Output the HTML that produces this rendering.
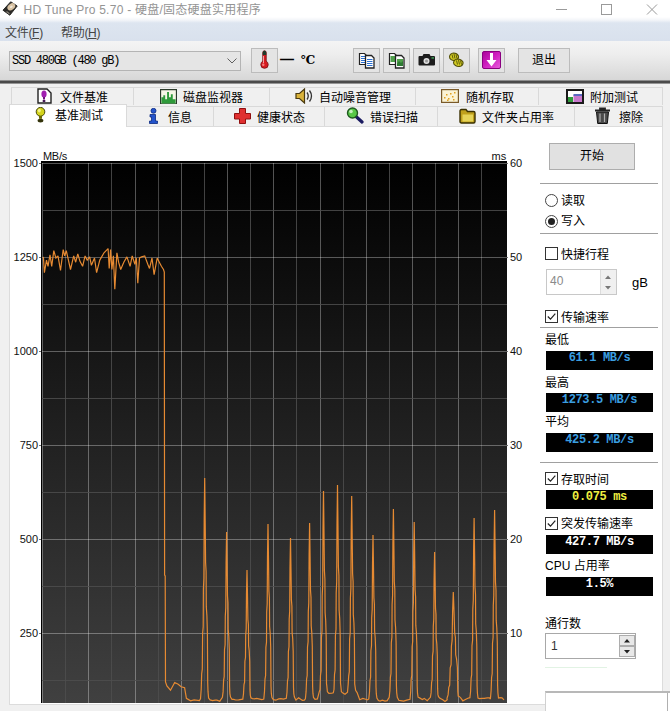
<!DOCTYPE html>
<html lang="zh-CN">
<head>
<meta charset="utf-8">
<title>HD Tune Pro 5.70 - 硬盘/固态硬盘实用程序</title>
<style>
html,body{margin:0;padding:0;}
body{width:670px;height:711px;overflow:hidden;background:#f0f0f0;position:relative;
 font-family:"Liberation Sans","Noto Sans CJK SC",sans-serif;font-size:12px;color:#000;}
#win div,#win svg,#win span{position:absolute;box-sizing:border-box;}
#win{position:absolute;left:0;top:0;width:670px;height:711px;overflow:hidden;background:#f0f0f0;}
#win span.t{white-space:nowrap;line-height:16px;}
/* title bar */
#title{left:0;top:0;width:670px;height:20px;background:#fff;}
#title .cap{left:23.5px;top:1px;font-size:12px;letter-spacing:0.25px;color:#949494;line-height:18px;white-space:nowrap;}
/* menu */
#menu{left:0;top:17px;width:670px;height:24px;background:linear-gradient(#fff 0,#f3f5f9 3px,#dde5f0 6px,#d9e1ed 100%);}
#menu span{top:8px;line-height:16px;color:#444;white-space:nowrap;}
/* toolbar */
#tool{left:0;top:41px;width:670px;height:40px;background:linear-gradient(#f4f4f4,#ededed 35%,#d6d6d6);}
#sep{left:0;top:80px;width:670px;height:4px;background:linear-gradient(#bdbdbd,#4a4a4a 30%,#4a4a4a 70%,#c8c8c8);}
.combo{left:9px;top:51px;width:232px;height:20px;border:1px solid #b4b4b4;background:#e5e5e5;}
.mono{font-family:"Liberation Mono","Noto Sans CJK SC",monospace;}
.btn{border:1px solid #bcbcbc;background:#e4e4e4;}
/* tabs */
.tab{height:20px;border:1px solid #d9d9d9;border-bottom:none;background:#f0f0f0;}
.tab span{top:2px;line-height:16px;white-space:nowrap;}
.chart{position:absolute;}
.chart line.maj{stroke:#fff;stroke-opacity:0.32;}
.lcd{background:#000;height:19px;width:107px;left:546px;text-align:center;color:#3a9ee0;
 font-family:"Liberation Mono",monospace;font-weight:bold;font-size:12px;line-height:15.500px;letter-spacing:-0.35px;white-space:nowrap;}
.ylab{font-size:11px;line-height:12px;width:30px;text-align:right;left:8px;color:#111;}
.rlab{font-size:11px;line-height:12px;left:511px;color:#111;}
.hr{left:540px;width:118px;height:1px;background:#a0a0a0;}

.lbl{left:561px;line-height:16px;white-space:nowrap;}

.ax{font-size:11px;line-height:14px !important;color:#111;}
.radio{width:13px;height:13px;border:1px solid #444;border-radius:50%;background:#fff;}
.radio i{position:absolute;left:2px;top:2px;width:7px;height:7px;border-radius:50%;background:#222;}
#win .cb{left:545px;}
.lcd b{font-weight:bold;}
</style>
</head>
<body>
<div id="win">
 <div id="title">
  <svg style="left:0px;top:0px" width="20" height="17" viewBox="0 0 20 17"><path d="M10.700 1.800L17.200 6L9.800 15.200L3 10.200Z" fill="#2b2a27" stroke="#2b2a27" stroke-width="1" stroke-linejoin="round"/><ellipse cx="11.300" cy="6.800" rx="4.300" ry="3" transform="rotate(-38 11.300 6.800)" fill="#d9c3a3"/><ellipse cx="11.300" cy="6.800" rx="1.500" ry="1" transform="rotate(-38 11.300 6.800)" fill="#f4eadb"/><path d="M6.500 11.500L9.500 13.700" stroke="#8a8478" stroke-width="1.200"/></svg>
  <span class="cap">HD Tune Pro 5.70 - 硬盘/固态硬盘实用程序</span>
  <svg style="left:556px;top:3px" width="104" height="14" viewBox="0 0 104 14" fill="none" stroke="#9a9a9a" stroke-width="1"><path d="M0 6.5h11"/><rect x="45.5" y="1.5" width="10" height="10"/><path d="M91 1.500l10 10M101 1.500l-10 10"/></svg>
 </div>
 <div id="menu"><span style="left:5px;letter-spacing:-0.3px">文件(<u>F</u>)</span><span style="left:61px;letter-spacing:-0.3px">帮助(<u>H</u>)</span></div>
 <div id="tool"></div>

 <div class="btn" style="left:251px;top:48px;width:27px;height:25px"></div>
 <svg style="left:259px;top:50px" width="11" height="20" viewBox="0 0 11 20"><path d="M3.800 2.500q0-1.700 1.700-1.700q1.700 0 1.700 1.700v8.500q2 1.500 2 3.700q0 3.600-3.700 3.600q-3.700 0-3.700-3.600q0-2.200 2-3.700z" fill="#d81a20" stroke="#7a1216" stroke-width="0.900"/><path d="M3.800 2.500q0-1.700 1.700-1.700q1.700 0 1.700 1.700v2.500h-3.400z" fill="#1c3a2a"/><path d="M4.500 6v7" stroke="#f0a0a0" stroke-width="1"/><circle cx="4.300" cy="14.800" r="1.200" fill="#f08080"/></svg>
 <span class="t" style="left:280px;top:51px;font-weight:bold;font-size:14px">—</span>
 <span class="t" style="left:301px;top:52px;font-family:'DejaVu Serif','Noto Serif CJK SC',serif;font-weight:bold;font-size:12px">℃</span>
 <div class="btn" style="left:353px;top:48px;width:27px;height:25px"></div>
 <div class="btn" style="left:383px;top:48px;width:27px;height:25px"></div>
 <div class="btn" style="left:413px;top:48px;width:27px;height:25px"></div>
 <div class="btn" style="left:443px;top:48px;width:27px;height:25px"></div>
 <div class="btn" style="left:478px;top:48px;width:27px;height:25px"></div>
 <div class="btn" style="left:518px;top:48px;width:52px;height:25px"></div>
 <span class="t" style="left:532px;top:52px;">退出</span>

 <!-- copy text icon -->
 <svg style="left:358px;top:52px" width="18" height="17" viewBox="0 0 18 17"><path d="M1.5 1.5h5l2 2v9h-7z" fill="#fff" stroke="#222" stroke-width="1.2"/><path d="M3 4.500h4M3 6.500h4M3 8.500h4M3 10.500h4" stroke="#2a6fd0" stroke-width="1"/><path d="M7.500 3.500h6l2.500 2.500v10h-8.500z" fill="#fff" stroke="#222" stroke-width="1.3"/><path d="M9 7.500h5.500M9 9.500h5.500M9 11.500h5.500M9 13.500h5.500" stroke="#2a6fd0" stroke-width="1"/></svg>
 <!-- copy image icon -->
 <svg style="left:388px;top:52px" width="18" height="17" viewBox="0 0 18 17"><path d="M1.500 1.500h5l2 2v9h-7z" fill="#fff" stroke="#222" stroke-width="1.200"/><rect x="2.500" y="4" width="5" height="6" fill="#4fa04a"/><path d="M7.500 3.500h6l2.500 2.500v10h-8.500z" fill="#fff" stroke="#222" stroke-width="1.300"/><rect x="9" y="7" width="6" height="7" fill="#4fa04a"/><path d="M9 12l2-3 2 2 2-2v5h-6z" fill="#2d7a32"/></svg>
 <!-- camera -->
 <svg style="left:418px;top:53px" width="18" height="14" viewBox="0 0 18 14"><path d="M5.500 1h6l1 2h3.500q1 0 1 1v7.500q0 1-1 1h-14.500q-1 0-1-1v-7.500q0-1 1-1h3z" fill="#1c1c1c"/><circle cx="8.500" cy="7.900" r="3" fill="#e0e0e0"/><circle cx="8.500" cy="7.900" r="1.500" fill="#9a9a9a"/><rect x="13.500" y="4.200" width="2.500" height="1.500" fill="#3a9a50"/></svg>
 <!-- yellow tool -->
 <svg style="left:448px;top:52px" width="17" height="16" viewBox="0 0 17 16"><g fill="#d2cb22" stroke="#55520a" stroke-width="1.100"><path d="M1.500 4.500q0.500-3 4-3.500q3.500 0 5 3q0.500 2.500-2 4q-3 1.200-5.500-0.500q-1.600-1.200-1.500-3z"/><path d="M5.500 10.500q0.500-3 4-3.500q3.500 0 5.500 3q0.500 2.500-2 4q-3 1.200-5.500-0.500q-2-1.200-2-3z"/></g><path d="M4 2.500l1 4M6 2l1 4.500M8 2.500l1 4M8.500 8.500l1 4M10.500 8l1 4.500M12.500 8.500l1 4" stroke="#55520a" stroke-width="0.900" fill="none"/></svg>
 <!-- purple download -->
 <svg style="left:482px;top:51px" width="19" height="18" viewBox="0 0 19 18"><defs><linearGradient id="pg" x1="0" y1="0" x2="1" y2="1"><stop offset="0" stop-color="#a80098"/><stop offset="0.500" stop-color="#d020c0"/><stop offset="1" stop-color="#e860dc"/></linearGradient></defs><rect x="0.500" y="0.500" width="18" height="17" rx="1.500" fill="url(#pg)" stroke="#8a0080" stroke-width="1"/><path d="M8 2h3v7h3.500l-5 6.500l-5-6.500h3.500z" fill="#fff"/></svg>

 <div id="sep"></div>
 <div class="combo"><span class="t mono" style="left:2px;top:1px;font-size:12px;letter-spacing:-1.25px">SSD 480GB (480 gB)</span>
  <svg style="left:217px;top:6px" width="10" height="6" viewBox="0 0 10 6" fill="none" stroke="#606060" stroke-width="1"><path d="M0.5 0.5l4.5 4.5l4.5-4.5"/></svg></div>


 <!-- tabs row 1 -->
 <div class="tab" style="left:11px;top:87px;width:123px;height:18px"></div>
 <svg style="left:37px;top:88px" width="15" height="16" viewBox="0 0 15 16"><path d="M1 1h9l4 4v10h-13z" fill="#fff" stroke="#222" stroke-width="1.400"/><ellipse cx="7" cy="6" rx="2.600" ry="3.600" fill="#a020b0"/><rect x="6" y="9" width="2" height="2.500" fill="#701080"/><rect x="5.500" y="12" width="3" height="2" rx="1" fill="#401050"/></svg>
 <span class="t" style="left:60px;top:89.700px">文件基准</span>
 <div class="tab" style="left:133px;top:87px;width:137px;height:18px"></div>
 <svg style="left:160px;top:88.500px" width="17" height="15.500" viewBox="0 0 18 15" preserveAspectRatio="none"><rect x="0.600" y="0.600" width="16.800" height="13.800" fill="#f6f6e6" stroke="#2a3a2a" stroke-width="1.200"/><path d="M1.500 14v-6h2v-2h2v4h2v-7h2v5h2v-3h2v5h3v4z" fill="#2e9a3a"/></svg>
 <span class="t" style="left:183px;top:89.700px">磁盘监视器</span>
 <div class="tab" style="left:269px;top:87px;width:147px;height:18px"></div>
 <svg style="left:295px;top:88px" width="18" height="16" viewBox="0 0 18 16"><path d="M1 5.500h3.500l5-4.500v14l-5-4.500h-3.500z" fill="#d9b23a" stroke="#4a3a10" stroke-width="1.200"/><path d="M12 4.500q2.500 3.500 0 7M14.500 2.500q4 5.500 0 11" fill="none" stroke="#333" stroke-width="1.300"/></svg>
 <span class="t" style="left:319px;top:89.700px">自动噪音管理</span>
 <div class="tab" style="left:415px;top:87px;width:124px;height:18px"></div>
 <svg style="left:441px;top:89px" width="18" height="14" viewBox="0 0 18 14"><rect x="0.600" y="0.600" width="16.800" height="12.800" fill="#fbf3d4" stroke="#7a5a28" stroke-width="1.200"/><g fill="#e0a020"><rect x="3" y="8" width="1.500" height="1.500"/><rect x="5" y="5" width="1.500" height="1.500"/><rect x="7" y="9" width="1.500" height="1.500"/><rect x="9" y="4" width="1.500" height="1.500"/><rect x="11" y="7" width="1.500" height="1.500"/><rect x="13" y="3" width="1.500" height="1.500"/><rect x="6" y="10.500" width="1.500" height="1.500"/><rect x="12" y="10" width="1.500" height="1.500"/></g></svg>
 <span class="t" style="left:466px;top:89.700px">随机存取</span>
 <div class="tab" style="left:538px;top:87px;width:125px;height:18px"></div>
 <svg style="left:566px;top:89px" width="18" height="15" viewBox="0 0 18 15"><rect x="1" y="1" width="16" height="13" fill="#fff" stroke="#1a1a1a" stroke-width="2"/><rect x="2" y="8" width="5" height="5" fill="#2e9a3a"/><rect x="7.500" y="6" width="8.500" height="7" fill="#c878cc"/><rect x="7.500" y="5" width="8.500" height="2" fill="#5a6ac0"/></svg>
 <span class="t" style="left:590px;top:89.700px">附加测试</span>
 <!-- tabs row 2 -->
 <div class="tab" style="left:126px;top:106px;width:88px;height:21px"></div>
 <svg style="left:148px;top:108px" width="11" height="16" viewBox="0 0 11 16"><circle cx="5.500" cy="2.800" r="2.500" fill="#2454cc" stroke="#0a2a80" stroke-width="0.800"/><path d="M2 6.500h5.500v6.500h2v2.500h-8v-2.500h2v-4h-1.500z" fill="#2454cc" stroke="#0a2a80" stroke-width="0.800"/></svg>
 <span class="t" style="left:168px;top:109.700px">信息</span>
 <div class="tab" style="left:213px;top:106px;width:112px;height:21px"></div>
 <svg style="left:234px;top:108px" width="17" height="16" viewBox="0 0 17 16"><path d="M5.500 0.500h6v5h5v5.500h-5v4.500h-6v-4.500h-5v-5.500h5z" fill="#e03030" stroke="#901010" stroke-width="1"/></svg>
 <span class="t" style="left:257px;top:109.700px">健康状态</span>
 <div class="tab" style="left:324px;top:106px;width:114px;height:21px"></div>
 <svg style="left:346px;top:107px" width="18" height="17" viewBox="0 0 18 17"><path d="M10 9.500l6 5.500" stroke="#1a1a60" stroke-width="3.200" stroke-linecap="round"/><circle cx="6.500" cy="6" r="5" fill="#58c848" stroke="#205a20" stroke-width="1.400"/><circle cx="5" cy="4.500" r="1.800" fill="#c8f0c0"/></svg>
 <span class="t" style="left:370px;top:109.700px">错误扫描</span>
 <div class="tab" style="left:437px;top:106px;width:138px;height:21px"></div>
 <svg style="left:459px;top:108px" width="17" height="16" viewBox="0 0 17 16"><path d="M1 3q0-1.500 1.500-1.500h4.500l1.500 2h6q1.500 0 1.500 1.500v8.500q0 1.500-1.500 1.500h-12q-1.500 0-1.500-1.500z" fill="#bfa01c" stroke="#3a3000" stroke-width="1.400"/><path d="M3.500 6.500h10.500v7h-10.500z" fill="#e6d458"/></svg>
 <span class="t" style="left:482px;top:109.700px">文件夹占用率</span>
 <div class="tab" style="left:574px;top:106px;width:89px;height:21px"></div>
 <svg style="left:594px;top:107px" width="17" height="17" viewBox="0 0 17 17"><path d="M1 3.500h15M6 3.500v-2h5v2" fill="none" stroke="#222" stroke-width="1.800"/><path d="M2.500 5h12l-1.200 11.500h-9.600z" fill="#4a4a4a" stroke="#111" stroke-width="1"/><path d="M6 6.500v8.500M10.500 6.500v8.500" stroke="#b0b0b0" stroke-width="1.200"/></svg>
 <span class="t" style="left:619px;top:109.700px">擦除</span>
 <div style="left:9px;top:126px;width:654px;height:579px;background:#fff;border:1px solid #dcdcdc;"></div>
 <div style="left:9px;top:104px;width:118px;height:23px;background:#fff;border:1px solid #dadada;border-bottom:none"></div>
 <svg style="left:35px;top:107px" width="11" height="16" viewBox="0 0 11 16"><ellipse cx="5.500" cy="4.800" rx="4.300" ry="4.400" fill="#d4d41c" stroke="#46460a" stroke-width="1"/><ellipse cx="4.300" cy="3.600" rx="1.500" ry="1.800" fill="#f2f290"/><rect x="4" y="9" width="3" height="2.800" fill="#6a6a00"/><ellipse cx="5.500" cy="13.600" rx="2.900" ry="1.900" fill="#33330a"/></svg>
 <span class="t" style="left:55px;top:108px">基准测试</span>

<svg class="chart" overflow="visible" width="465" height="540" viewBox="0 0 465 540" style="left:42px;top:163px">
<defs><linearGradient id="bg" x1="0" y1="0" x2="0" y2="1"><stop offset="0" stop-color="#000"/><stop offset="1" stop-color="#404040"/></linearGradient></defs>
<rect x="-1" y="-2" width="466" height="542" fill="#000"/>
<rect width="465" height="540" fill="url(#bg)"/>
<g stroke="#4e4e4e" stroke-opacity="0.85" stroke-width="1" shape-rendering="crispEdges">
<line class="maj" x1="0.5" y1="0" x2="0.5" y2="540"/>
<line x1="23.5" y1="0" x2="23.5" y2="540"/>
<line class="maj" x1="46.5" y1="0" x2="46.5" y2="540"/>
<line x1="69.5" y1="0" x2="69.5" y2="540"/>
<line class="maj" x1="93.5" y1="0" x2="93.5" y2="540"/>
<line x1="116.5" y1="0" x2="116.5" y2="540"/>
<line class="maj" x1="139.5" y1="0" x2="139.5" y2="540"/>
<line x1="162.5" y1="0" x2="162.5" y2="540"/>
<line class="maj" x1="185.5" y1="0" x2="185.5" y2="540"/>
<line x1="208.5" y1="0" x2="208.5" y2="540"/>
<line class="maj" x1="231.5" y1="0" x2="231.5" y2="540"/>
<line x1="254.5" y1="0" x2="254.5" y2="540"/>
<line class="maj" x1="278.5" y1="0" x2="278.5" y2="540"/>
<line x1="301.5" y1="0" x2="301.5" y2="540"/>
<line class="maj" x1="324.5" y1="0" x2="324.5" y2="540"/>
<line x1="347.5" y1="0" x2="347.5" y2="540"/>
<line class="maj" x1="370.5" y1="0" x2="370.5" y2="540"/>
<line x1="393.5" y1="0" x2="393.5" y2="540"/>
<line class="maj" x1="416.5" y1="0" x2="416.5" y2="540"/>
<line x1="439.5" y1="0" x2="439.5" y2="540"/>
<line class="maj" x1="0" y1="0.5" x2="465" y2="0.5"/>
<line x1="0" y1="47.5" x2="465" y2="47.5"/>
<line class="maj" x1="0" y1="94.5" x2="465" y2="94.5"/>
<line x1="0" y1="141.5" x2="465" y2="141.5"/>
<line class="maj" x1="0" y1="188.5" x2="465" y2="188.5"/>
<line x1="0" y1="235.5" x2="465" y2="235.5"/>
<line class="maj" x1="0" y1="282.5" x2="465" y2="282.5"/>
<line x1="0" y1="329.5" x2="465" y2="329.5"/>
<line class="maj" x1="0" y1="376.5" x2="465" y2="376.5"/>
<line x1="0" y1="423.5" x2="465" y2="423.5"/>
<line class="maj" x1="0" y1="470.5" x2="465" y2="470.5"/>
<line x1="0" y1="517.5" x2="465" y2="517.5"/>
</g>
<g stroke="#707070" stroke-width="1" shape-rendering="crispEdges">
<line x1="-3" y1="0.5" x2="-1" y2="0.5"/><line x1="465" y1="0.5" x2="466" y2="0.5"/>
<line x1="-3" y1="94.5" x2="-1" y2="94.5"/><line x1="465" y1="94.5" x2="466" y2="94.5"/>
<line x1="-3" y1="188.5" x2="-1" y2="188.5"/><line x1="465" y1="188.5" x2="466" y2="188.5"/>
<line x1="-3" y1="282.5" x2="-1" y2="282.5"/><line x1="465" y1="282.5" x2="466" y2="282.5"/>
<line x1="-3" y1="376.5" x2="-1" y2="376.5"/><line x1="465" y1="376.5" x2="466" y2="376.5"/>
<line x1="-3" y1="470.5" x2="-1" y2="470.5"/><line x1="465" y1="470.5" x2="466" y2="470.5"/>
</g>
<polyline points="1.4,93.9 2.4,109.6 4.5,97.1 6.0,103.3 8.0,91.8 9.7,103.3 11.8,87.7 13.9,95.0 16.0,92.9 18.5,107.5 21.2,86.6 22.7,92.9 24.3,87.7 26.4,97.1 28.5,106.5 31.7,92.9 33.7,99.2 35.8,90.8 37.9,98.1 40.6,103.3 43.1,92.9 45.2,97.1 47.7,93.9 49.4,102.3 52.5,95.0 54.6,109.6 57.8,97.1 62.0,89.8 66.1,85.6 67.2,105.4 68.6,86.6 69.9,106.5 71.4,92.9 72.8,126.3 74.9,89.8 76.6,99.2 78.7,106.5 81.8,99.2 84.9,93.9 88.1,103.3 90.2,92.9 92.9,101.3 94.3,95.0 95.8,120.1 97.5,95.0 99.6,93.9 102.7,92.9 105.8,101.3 107.5,105.4 110.0,95.0 112.1,111.7 115.2,95.0 117.3,99.2 119.4,103.3 121.5,106.5 122.3,109.0 122.6,412.0 123.2,413.0 123.5,519.0 124.9,523.0 128.5,527.2 132.7,519.5 136.2,521.2 139.1,523.7 142.6,524.8 144.4,535.3 148.6,537.8 152.1,536.8 157.4,537.5 158.5,535.7 159.2,526.2 159.7,510.6 160.3,506.2 160.6,470.6 161.2,463.9 161.4,426.1 161.9,415.0 162.2,355.0 162.7,315.0 163.2,359.5 163.6,399.5 164.1,408.4 164.3,443.9 164.9,452.8 165.4,470.6 165.7,519.5 166.0,528.4 166.6,535.0 168.1,536.9 170.6,537.6 173.1,537.2 174.9,537.1 177.8,538.2 180.4,534.4 181.1,528.9 181.6,517.1 182.2,513.7 182.5,486.8 183.1,481.8 183.3,453.1 183.8,444.7 184.1,399.3 184.6,369.0 185.1,402.7 185.5,433.0 186.0,439.7 186.2,466.6 186.8,473.3 187.3,486.8 187.6,523.8 187.9,530.6 188.5,534.1 190.0,536.3 191.8,536.4 193.7,537.0 196.6,536.8 199.3,536.4 200.8,536.2 201.5,530.8 202.0,521.7 202.6,519.1 202.9,498.2 203.5,494.3 203.7,472.1 204.2,465.6 204.5,430.5 205.0,407.0 205.5,433.1 205.9,456.5 206.4,461.7 206.6,482.6 207.2,487.8 207.7,498.2 208.0,526.9 208.3,532.1 208.9,534.9 210.4,535.6 212.6,535.8 214.7,535.3 216.8,535.9 219.8,536.7 221.8,536.1 222.5,528.5 223.0,516.1 223.6,512.6 223.9,484.4 224.5,479.1 224.7,449.1 225.2,440.3 225.5,392.7 226.0,361.0 226.5,396.3 226.9,428.0 227.4,435.0 227.6,463.3 228.2,470.3 228.7,484.4 229.0,523.2 229.3,530.2 229.9,534.5 231.4,536.6 233.8,537.2 236.7,535.9 238.9,535.6 241.4,536.2 244.3,535.4 245.0,529.2 245.5,517.8 246.1,514.6 246.4,488.6 247.0,483.7 247.2,456.1 247.7,448.0 248.0,404.2 248.5,375.0 249.0,407.5 249.4,436.7 249.9,443.2 250.1,469.1 250.7,475.6 251.2,488.6 251.5,524.3 251.8,530.8 252.4,534.0 253.9,537.1 256.6,534.8 258.7,536.3 260.4,537.3 262.3,537.2 263.4,535.8 264.1,528.4 264.6,516.0 265.2,512.5 265.5,484.1 266.1,478.8 266.3,448.6 266.8,439.8 267.1,391.9 267.6,360.0 268.1,395.5 268.5,427.4 269.0,434.5 269.2,462.8 269.8,469.9 270.3,484.1 270.6,523.1 270.9,530.2 271.5,534.5 273.0,536.3 275.4,535.9 277.3,528.6 278.0,526.8 278.5,512.2 279.1,508.0 279.4,474.5 280.0,468.2 280.2,432.6 280.7,422.2 281.0,365.7 281.5,328.0 282.0,369.9 282.4,407.5 282.9,415.9 283.1,449.4 283.7,457.8 284.2,474.5 284.5,520.6 284.8,522.9 285.4,528.7 286.9,530.3 289.9,530.1 291.3,529.8 292.0,526.5 292.5,511.5 293.1,507.2 293.4,472.7 294.0,466.3 294.2,429.6 294.7,418.9 295.0,360.8 295.5,322.0 296.0,365.1 296.4,403.8 296.9,412.4 297.1,446.9 297.7,455.5 298.2,472.7 298.5,520.1 298.8,522.7 299.4,528.8 300.9,530.1 303.0,531.3 305.5,529.2 306.2,521.1 306.7,512.8 307.3,508.7 307.6,476.0 308.2,469.9 308.4,435.1 308.9,424.9 309.2,369.8 309.7,333.0 310.2,373.9 310.6,410.6 311.1,418.8 311.3,451.5 311.9,459.7 312.4,476.0 312.7,521.0 313.0,523.1 313.6,527.4 315.1,529.6 317.7,536.8 320.8,535.4 323.7,536.3 325.5,536.9 326.8,535.9 327.5,529.0 328.0,517.5 328.6,514.2 328.9,487.7 329.5,482.8 329.7,454.6 330.2,446.4 330.5,401.8 331.0,372.0 331.5,405.1 331.9,434.8 332.4,441.4 332.6,467.9 333.2,474.5 333.7,487.7 334.0,524.1 334.3,530.7 334.9,535.0 336.4,537.6 338.1,538.1 340.3,537.2 343.0,538.1 345.2,537.6 347.2,534.3 347.9,527.7 348.4,514.3 349.0,510.5 349.3,479.9 349.9,474.2 350.1,441.6 350.6,432.1 350.9,380.4 351.4,346.0 351.9,384.3 352.3,418.7 352.8,426.3 353.0,457.0 353.6,464.6 354.1,479.9 354.4,522.0 354.7,529.6 355.3,534.4 356.8,537.3 358.7,537.6 361.6,538.1 364.7,537.2 368.0,536.2 368.7,528.4 369.2,515.9 369.8,512.3 370.1,483.8 370.7,478.5 370.9,448.1 371.4,439.2 371.7,391.1 372.2,359.0 372.7,394.7 373.1,426.8 373.6,433.9 373.8,462.4 374.4,469.5 374.9,483.8 375.2,523.0 375.5,530.2 376.1,534.2 377.6,534.9 380.3,536.6 382.3,535.4 385.2,537.7 388.4,534.3 389.1,529.9 389.6,519.5 390.2,516.5 390.5,492.8 391.1,488.4 391.3,463.1 391.8,455.7 392.1,415.7 392.6,389.0 393.1,418.7 393.5,445.4 394.0,451.3 394.2,475.0 394.8,480.9 395.3,492.8 395.6,525.4 395.9,531.4 396.5,533.6 398.0,535.3 400.8,536.7 403.0,538.4 405.2,536.7 405.0,535.4 406.1,531.9 406.8,524.3 407.7,522.1 408.2,504.8 409.1,501.6 409.4,483.1 410.1,477.7 410.6,448.5 411.3,429.0 412.1,450.7 412.7,470.2 413.4,474.5 413.7,491.8 414.6,496.1 415.4,504.8 415.8,528.6 416.2,533.0 417.2,533.4 418.7,534.8 420.9,537.9 422.9,536.8 425.9,535.2 427.9,534.7 428.6,528.2 429.1,515.4 429.7,511.8 430.0,482.6 430.6,477.1 430.8,446.1 431.3,437.0 431.6,387.8 432.1,355.0 432.6,391.5 433.0,424.3 433.5,431.6 433.7,460.7 434.3,468.0 434.8,482.6 435.1,522.7 435.4,530.0 436.0,535.1 437.5,535.6 440.4,535.4 442.3,535.3 445.2,534.9 447.5,534.9 448.4,536.0 449.1,527.8 449.6,514.5 450.2,510.7 450.5,480.2 451.1,474.5 451.3,442.1 451.8,432.6 452.1,381.3 452.6,347.0 453.1,385.1 453.5,419.3 454.0,426.9 454.2,457.4 454.8,465.0 455.3,480.2 455.6,522.1 455.9,529.7 456.5,535.0 458.0,534.6 460.0,534.9 462.0,536.9" fill="none" stroke="#e68a32" stroke-width="1.2" stroke-linejoin="miter" stroke-miterlimit="2"/>
</svg>

 <!-- axis labels -->
 <span class="t ax" style="left:43px;top:148.500px;letter-spacing:-0.3px">MB/s</span>
 <span class="t ax" style="left:491.500px;top:148.500px;">ms</span>
 <span class="t ax" style="left:6px;width:32px;text-align:right;top:156px;">1500</span>
 <span class="t ax" style="left:6px;width:32px;text-align:right;top:250px;">1250</span>
 <span class="t ax" style="left:6px;width:32px;text-align:right;top:344px;">1000</span>
 <span class="t ax" style="left:6px;width:32px;text-align:right;top:438px;">750</span>
 <span class="t ax" style="left:6px;width:32px;text-align:right;top:532px;">500</span>
 <span class="t ax" style="left:6px;width:32px;text-align:right;top:626px;">250</span>
 <span class="t ax" style="left:510px;top:156px;">60</span>
 <span class="t ax" style="left:510px;top:250px;">50</span>
 <span class="t ax" style="left:510px;top:344px;">40</span>
 <span class="t ax" style="left:510px;top:438px;">30</span>
 <span class="t ax" style="left:510px;top:532px;">20</span>
 <span class="t ax" style="left:510px;top:626px;">10</span>
 <!-- right panel -->
 <div class="btn" style="left:549px;top:143px;width:86px;height:27px;background:#e1e1e1;border-color:#adadad"></div>
 <span class="t" style="left:580px;top:148px">开始</span>
 <div class="hr" style="top:183px"></div>
 <div class="radio" style="left:545px;top:194px"></div><span class="t" style="left:561px;top:193px">读取</span>
 <div class="radio" style="left:545px;top:215px"><i></i></div><span class="t" style="left:561px;top:213px">写入</span>
 <div class="hr" style="top:233px"></div>
 <svg class="cb" style="top:247px" width="13" height="13" viewBox="0 0 13 13"><rect x="0.500" y="0.500" width="12" height="12" fill="#fff" stroke="#333"/></svg><span class="t" style="left:561px;top:246.500px">快捷行程</span>
 <div style="left:546px;top:269px;width:71px;height:26px;border:1px solid #c8c8c8;background:#fff"></div>
 <span class="t" style="left:550px;top:273px;color:#8a8a8a">40</span>
 <div style="left:600px;top:270px;width:16px;height:24px;background:#f0f0f0;border-left:1px solid #dcdcdc"></div>
 <svg style="left:604px;top:275px" width="8" height="15" viewBox="0 0 8 15"><path d="M1 4l3-3.500l3 3.500zM1 11l3 3.500l3-3.500z" fill="#777"/></svg>
 <span class="t" style="left:632px;top:275px;font-size:13px">gB</span>
 <svg class="cb" style="top:310px" width="13" height="13" viewBox="0 0 13 13"><rect x="0.500" y="0.500" width="12" height="12" fill="#fff" stroke="#333"/><path d="M2.800 6.500l2.700 2.700l4.800-5.500" fill="none" stroke="#222" stroke-width="1.200"/></svg><span class="t" style="left:561px;top:309.500px">传输速率</span>
 <div class="hr" style="top:327px"></div>
 <span class="t" style="left:545px;top:332px">最低</span>
 <div class="lcd" style="top:351px"><b>61.1 MB/s</b></div>
 <span class="t" style="left:545px;top:375px">最高</span>
 <div class="lcd" style="top:393px"><b>1273.5 MB/s</b></div>
 <span class="t" style="left:545px;top:414px">平均</span>
 <div class="lcd" style="top:433px"><b>425.2 MB/s</b></div>
 <div class="hr" style="top:462px"></div>
 <svg class="cb" style="top:472px" width="13" height="13" viewBox="0 0 13 13"><rect x="0.500" y="0.500" width="12" height="12" fill="#fff" stroke="#333"/><path d="M2.800 6.500l2.700 2.700l4.800-5.500" fill="none" stroke="#222" stroke-width="1.200"/></svg><span class="t" style="left:561px;top:471.500px">存取时间</span>
 <div class="lcd" style="top:490px;color:#f0f040"><b>0.075 ms</b></div>
 <svg class="cb" style="top:517px" width="13" height="13" viewBox="0 0 13 13"><rect x="0.500" y="0.500" width="12" height="12" fill="#fff" stroke="#333"/><path d="M2.800 6.500l2.700 2.700l4.800-5.500" fill="none" stroke="#222" stroke-width="1.200"/></svg><span class="t" style="left:561px;top:516px">突发传输速率</span>
 <div class="lcd" style="top:535px;color:#fff"><b>427.7 MB/s</b></div>
 <span class="t" style="left:545px;top:558px">CPU 占用率</span>
 <div class="lcd" style="top:577px;color:#fff"><b>1.5%</b></div>
 <span class="t" style="left:545px;top:616px">通行数</span>
 <div style="left:545px;top:633px;width:91px;height:26px;border:1px solid #a8a8a8;background:#fff"></div>
 <span class="t" style="left:551px;top:638px;color:#333">1</span>
 <div style="left:619px;top:635px;width:16px;height:22px;background:#f0f0f0;"></div>
 <div style="left:619px;top:635px;width:16px;height:11px;border:1px solid #adadad;background:#e8e8e8"></div>
 <div style="left:619px;top:646px;width:16px;height:11px;border:1px solid #adadad;background:#e8e8e8"></div>
 <svg style="left:623px;top:638px" width="8" height="17" viewBox="0 0 8 17"><path d="M1 4.500l3-3.500l3 3.500zM1 12l3 3.500l3-3.500z" fill="#222"/></svg>
 <div style="left:545px;top:667px;width:62px;height:1px;background:#e2f3e4"></div>
 <div style="left:545px;top:691px;width:130px;height:30px;background:#fff;border-top:2px solid #b8b8b8;border-left:1px solid #d0d0d0"></div>
 <div style="left:667px;top:693px;width:1px;height:20px;background:#b0b0b0"></div>


</div>
</body>
</html>
